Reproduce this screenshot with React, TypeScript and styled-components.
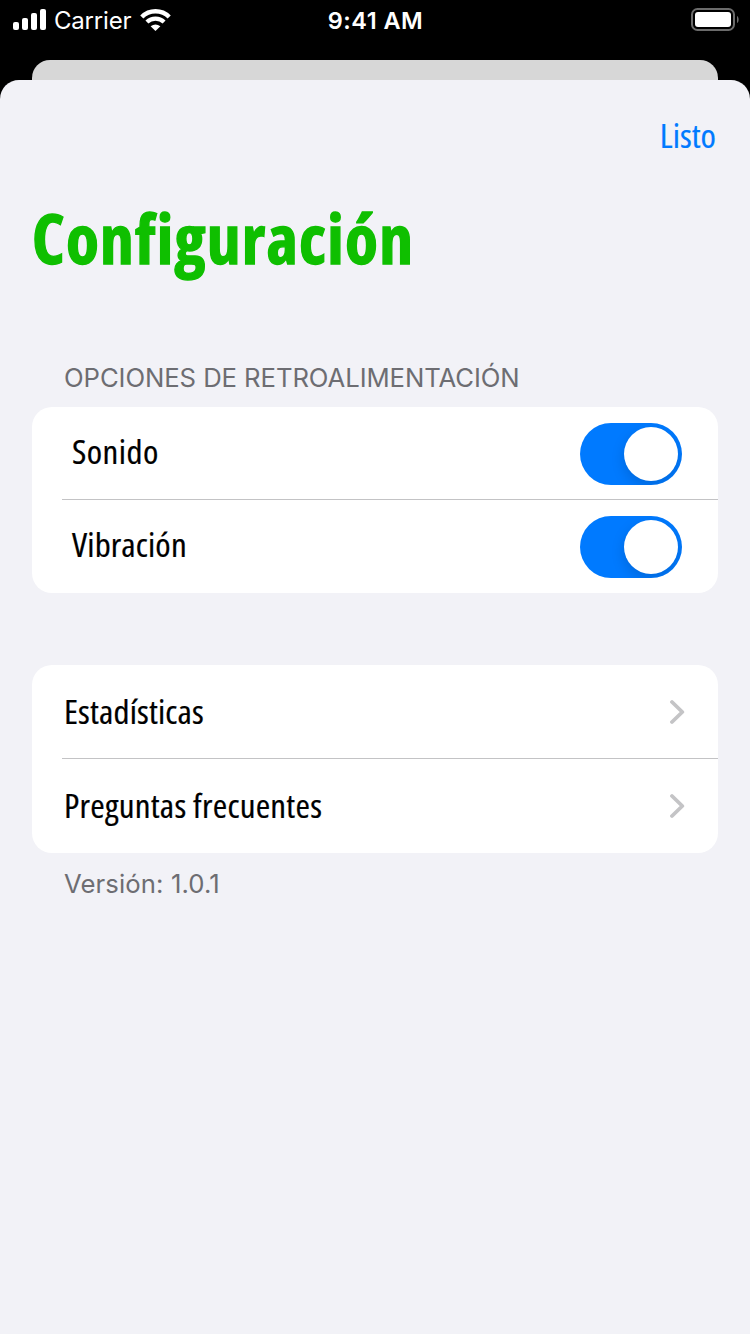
import React from "react";
import styled, { createGlobalStyle } from "styled-components";

const systemFont = 'Inter, "Liberation Sans", sans-serif';
const brandFont = '"Open Sans", "Liberation Sans Narrow", sans-serif';

const GlobalStyle = createGlobalStyle`
  * { box-sizing: border-box; }
  body { margin: 0; background: #000; }
`;

const Screen = styled.div`
  display: flex;
  flex-direction: column;
  width: 750px;
  height: 1334px;
  overflow: hidden;
  background: #000;
  font-family: ${systemFont};
`;

const StatusBar = styled.header`
  display: grid;
  grid-template-columns: 1fr auto 1fr;
  align-items: center;
  flex: none;
  height: 40px;
  padding: 0 11px 0 13px;
  color: #fff;
`;

const Signal = styled.div`
  display: flex;
  align-items: center;
  svg { display: block; }
`;

const Carrier = styled.span`
  margin: 2px 9px 0 7px;
  font-size: 24px;
  line-height: 30px;
  letter-spacing: -0.2px;
`;

const Clock = styled.span`
  margin: 2px 1px 0 0;
  font-size: 23.5px;
  font-weight: 600;
  line-height: 30px;
  letter-spacing: 0.5px;
`;

const BatterySlot = styled.div`
  display: flex;
  justify-content: flex-end;
  svg { display: block; }
`;

const BackSheet = styled.div`
  flex: none;
  height: 20px;
  margin: 20px 32px 0;
  border-radius: 18px 18px 0 0;
  background: #d7d7d7;
`;

const Sheet = styled.main`
  flex: 1;
  padding: 0 32px;
  border-radius: 19px 19px 0 0;
  background: #f2f2f7;
`;

const NavBar = styled.nav`
  display: flex;
  justify-content: flex-end;
  height: 108px;
  padding: 32px 2px 0 0;
`;

const DoneButton = styled.button`
  height: 48px;
  padding: 0;
  border: 0;
  background: none;
  color: #007aff;
  font: 400 33px/48px ${brandFont};
  font-stretch: 75%;
  -webkit-text-stroke: 0.2px currentColor;
  transform: scaleX(1.06);
  transform-origin: right center;
`;

const Title = styled.h1`
  height: 100px;
  margin: 0 0 72px;
  color: #0fbf00;
  font: 700 67.5px/100px ${brandFont};
  font-stretch: 75%;
  letter-spacing: 1.3px;
  -webkit-text-stroke: 1.3px currentColor;
  white-space: nowrap;
`;

const SectionHeader = styled.h2`
  height: 47px;
  margin: 0;
  padding: 2px 0 0 32px;
  color: #6d6d72;
  font-size: 25.7px;
  font-weight: 400;
  line-height: 32px;
  letter-spacing: -0.08px;
`;

const Card = styled.section<{ $gap?: number; $bottom?: number }>`
  margin-bottom: ${(p) => p.$gap ?? 0}px;
  padding-bottom: ${(p) => p.$bottom ?? 0}px;
  border-radius: 20px;
  background: #fff;
`;

const Row = styled.div<{ $height: number; $inset: number; $right: number }>`
  display: flex;
  align-items: center;
  justify-content: space-between;
  height: ${(p) => p.$height}px;
  padding: 0 ${(p) => p.$right}px 0 ${(p) => p.$inset}px;
`;

const Divider = styled.div`
  height: 1px;
  margin-left: 30px;
  background: #c3c3c5;
`;

const Label = styled.span<{ $tracking?: number; $lift?: number }>`
  margin-bottom: ${(p) => p.$lift ?? 0}px;
  color: #000;
  font: 400 33px/48px ${brandFont};
  font-stretch: 75%;
  letter-spacing: ${(p) => p.$tracking ?? 0}px;
  -webkit-text-stroke: 0.2px currentColor;
  white-space: nowrap;
  transform: scaleX(1.06);
  transform-origin: left center;
`;

const Toggle = styled.button`
  display: flex;
  justify-content: flex-end;
  width: 102px;
  height: 62px;
  margin-top: 2px;
  padding: 4px;
  border: 0;
  border-radius: 31px;
  background: #007aff;
  overflow: hidden;
`;

const Knob = styled.span`
  width: 54px;
  height: 54px;
  border-radius: 50%;
  background: #fff;
  box-shadow: 0 5px 14px rgba(0, 0, 0, 0.15);
`;

const Footer = styled.p`
  margin: 15px 0 0;
  padding-left: 32px;
  color: #6d6d72;
  font-size: 25.7px;
  line-height: 32px;
  letter-spacing: 0.1px;
`;

const SignalBars = () => (
  <svg width="34" height="22" viewBox="0 0 34 22" fill="#fff">
    <rect x="0" y="13" width="6" height="8" rx="2" />
    <rect x="9" y="9" width="6" height="12" rx="2" />
    <rect x="18" y="4" width="6" height="17" rx="2" />
    <rect x="27" y="0" width="6" height="21" rx="2" />
  </svg>
);

const Wifi = () => (
  <svg width="31" height="22" viewBox="0 0 31 22" fill="none">
    <path d="M1.8 8A19.2 19.2 0 0 1 29.2 8" stroke="#fff" strokeWidth="4.4" />
    <path d="M6.9 13.1A12.3 12.3 0 0 1 24.1 13.1" stroke="#fff" strokeWidth="4.2" />
    <path d="M10.6 17.3Q15.5 13.5 20.4 17.3L15.5 22Z" fill="#fff" />
  </svg>
);

const Battery = () => (
  <svg width="48" height="24" viewBox="0 0 48 24">
    <rect x="1" y="1" width="42" height="21" rx="5.5" fill="none" stroke="#6b6b6b" strokeWidth="2" />
    <rect x="4" y="4" width="36" height="15" rx="3" fill="#fff" />
    <path d="M46 8C48.2 9 48.2 14 46 15Z" fill="#6b6b6b" />
  </svg>
);

const Chevron = () => (
  <svg width="16" height="26" viewBox="0 0 16 26" fill="none">
    <path d="M2 3L12.3 13L2 23" stroke="#c4c4c6" strokeWidth="3.8" strokeLinecap="round" strokeLinejoin="round" />
  </svg>
);

export default function App() {
  return (
    <Screen>
      <GlobalStyle />
      <StatusBar>
        <Signal>
          <SignalBars />
          <Carrier>Carrier</Carrier>
          <Wifi />
        </Signal>
        <Clock>9:41 AM</Clock>
        <BatterySlot>
          <Battery />
        </BatterySlot>
      </StatusBar>
      <BackSheet />
      <Sheet>
        <NavBar>
          <DoneButton>Listo</DoneButton>
        </NavBar>
        <Title>Configuración</Title>
        <SectionHeader>OPCIONES DE RETROALIMENTACIÓN</SectionHeader>
        <Card $gap={72} $bottom={1}>
          <Row $height={92} $inset={40} $right={36}>
            <Label $tracking={0.4} $lift={2}>Sonido</Label>
            <Toggle role="switch" aria-checked="true" aria-label="Sonido">
              <Knob />
            </Toggle>
          </Row>
          <Divider />
          <Row $height={92} $inset={40} $right={36}>
            <Label $tracking={0.12} $lift={2}>Vibración</Label>
            <Toggle role="switch" aria-checked="true" aria-label="Vibración">
              <Knob />
            </Toggle>
          </Row>
        </Card>
        <Card>
          <Row $height={93} $inset={32} $right={32}>
            <Label $tracking={0.14}>Estadísticas</Label>
            <Chevron />
          </Row>
          <Divider />
          <Row $height={94} $inset={32} $right={32}>
            <Label $tracking={0.22}>Preguntas frecuentes</Label>
            <Chevron />
          </Row>
        </Card>
        <Footer>Versión: 1.0.1</Footer>
      </Sheet>
    </Screen>
  );
}
